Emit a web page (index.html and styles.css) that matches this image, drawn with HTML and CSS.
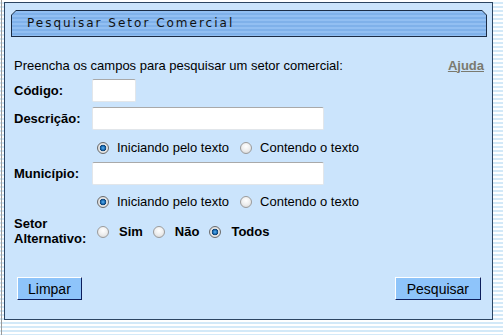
FILE: index.html
```html
<!DOCTYPE html>
<html lang="pt">
<head>
  <meta charset="UTF-8">
  <title>Pesquisar Setor Comercial</title>
  <link rel="stylesheet" href="styles.css">
</head>
<body>
  <div class="page">
    <form class="panel" onsubmit="return false">
      <div class="header">
        <div class="header-inner">Pesquisar Setor Comercial</div>
      </div>

      <div class="content">
        <div class="intro">
          <span>Preencha os campos para pesquisar um setor comercial:</span>
          <a href="#" class="help">Ajuda</a>
        </div>

        <div class="row">
          <label class="label" for="codigo">Código:</label>
          <input type="text" id="codigo" class="field field-small">
        </div>

        <div class="row">
          <label class="label" for="descricao">Descrição:</label>
          <input type="text" id="descricao" class="field">
        </div>

        <div class="row row-radio">
          <span class="label"></span>
          <label class="opt"><input type="radio" name="tipoDesc" checked> Iniciando pelo texto</label>
          <label class="opt"><input type="radio" name="tipoDesc"> Contendo o texto</label>
        </div>

        <div class="row">
          <label class="label" for="municipio">Município:</label>
          <input type="text" id="municipio" class="field">
        </div>

        <div class="row row-radio row-radio-2">
          <span class="label"></span>
          <label class="opt"><input type="radio" name="tipoMun" checked> Iniciando pelo texto</label>
          <label class="opt"><input type="radio" name="tipoMun"> Contendo o texto</label>
        </div>

        <div class="row row-setor">
          <span class="label label-two">Setor<br>Alternativo:</span>
          <label class="opt opt-bold"><input type="radio" name="alt"> Sim</label>
          <label class="opt opt-bold"><input type="radio" name="alt"> Não</label>
          <label class="opt opt-bold"><input type="radio" name="alt" checked> Todos</label>
        </div>

        <div class="buttons">
          <button type="reset" class="btn">Limpar</button>
          <button type="submit" class="btn btn-search">Pesquisar</button>
        </div>
      </div>
    </form>
  </div>
</body>
</html>
```

FILE: styles.css
```css
body {
  margin: 0;
  padding: 0 0 0 1px;
  font-family: 'Liberation Sans', Arial, sans-serif;
  color: #000;
  background: repeating-linear-gradient(to bottom, #ffffff 0, #ffffff 2px, #d3e9f8 2px, #d3e9f8 4px);
}

.page {
  min-height: 100vh;
  border-left: 1px solid #9a9a9a;
  padding: 2px 0 0 2px;
  box-sizing: border-box;
}

.panel {
  width: 489px;
  height: 318px;
  box-sizing: border-box;
  margin: 0;
  border: 1px solid #2c4562;
  background-color: #cbe4fc;
}

.header {
  margin: 7px 0 0 6px;
  width: 476px;
  height: 27px;
  padding: 1px;
  box-sizing: border-box;
  background-color: #1b2c45;
  clip-path: polygon(5px 0, calc(100% - 5px) 0, 100% 5px, 100% 100%, 0 100%, 0 5px);
}

.header-inner {
  height: 100%;
  box-sizing: border-box;
  padding-left: 15px;
  line-height: 25px;
  font-family: 'DejaVu Sans', Verdana, sans-serif;
  font-size: 12px;
  letter-spacing: 2px;
  color: #111;
  background: repeating-linear-gradient(to bottom, #92bff2 0, #92bff2 2px, #7fb1ea 2px, #7fb1ea 4px);
  clip-path: polygon(4px 0, calc(100% - 4px) 0, 100% 4px, 100% 100%, 0 100%, 0 4px);
}

.content {
  padding: 0 8px 0 9px;
}

.intro {
  display: flex;
  justify-content: space-between;
  align-items: center;
  margin-top: 20px;
  height: 16px;
  font-size: 13px;
}

.help {
  font-size: 13px;
  font-weight: bold;
  color: #7a7a70;
}

.row {
  display: flex;
  align-items: center;
  height: 23px;
  margin-top: 5px;
}

.row:nth-child(2) {
  margin-top: 6px;
}

.label {
  width: 78px;
  flex-shrink: 0;
  font-size: 13px;
  font-weight: bold;
}

.label-two {
  line-height: 15px;
}

.field {
  width: 232px;
  height: 23px;
  box-sizing: border-box;
  margin: 0;
  border: 1px solid #e2e6ea;
  border-top-color: #a9a9a9;
  border-radius: 2px;
  background: #fff;
  font-family: 'Liberation Sans', Arial, sans-serif;
  font-size: 12px;
}

.field-small {
  width: 44px;
}

.row-radio {
  height: 32px;
  margin-top: 0;
  padding-top: 3px;
  box-sizing: border-box;
}

.row-radio-2 {
  height: 30px;
}

.row-radio + .row {
  margin-top: 0;
}

.row-setor {
  height: 31px;
  margin-top: 0;
}

.row-setor .opt {
  padding-top: 2px;
}

.opt {
  display: flex;
  align-items: center;
  font-size: 13px;
  margin-right: 11px;
}

.opt-bold {
  font-weight: bold;
  margin-right: 10px;
}

.opt input {
  appearance: none;
  width: 12px;
  height: 12px;
  margin: 0 8px 0 5px;
  border-radius: 50%;
  border: 1px solid #9b9b9b;
  background: radial-gradient(circle at 50% 35%, #ffffff 0, #ececec 55%, #cfcfcf 100%);
  box-sizing: border-box;
}

.opt + .opt input {
  margin-left: 0;
}

.opt-bold input {
  margin-right: 10px;
}

.opt input:checked {
  border-color: #6b6b6b;
  background: radial-gradient(circle, #5fb4f0 0, #1769b3 2px, #0f3f6e 3px, #e8e8e8 3.6px, #cfcfcf 100%);
}

.buttons {
  display: flex;
  justify-content: space-between;
  margin-top: 31px;
  padding: 0 3px 0 3px;
}

.btn {
  height: 23px;
  padding: 0 10px;
  font-family: 'Liberation Sans', Arial, sans-serif;
  font-size: 14px;
  color: #000;
  background-color: #8ec4fa;
  border: 1px solid;
  border-color: #ffffff #0d1e5c #0d1e5c #ffffff;
  cursor: pointer;
}

.btn-search {
  padding: 0 11px;
}
```
